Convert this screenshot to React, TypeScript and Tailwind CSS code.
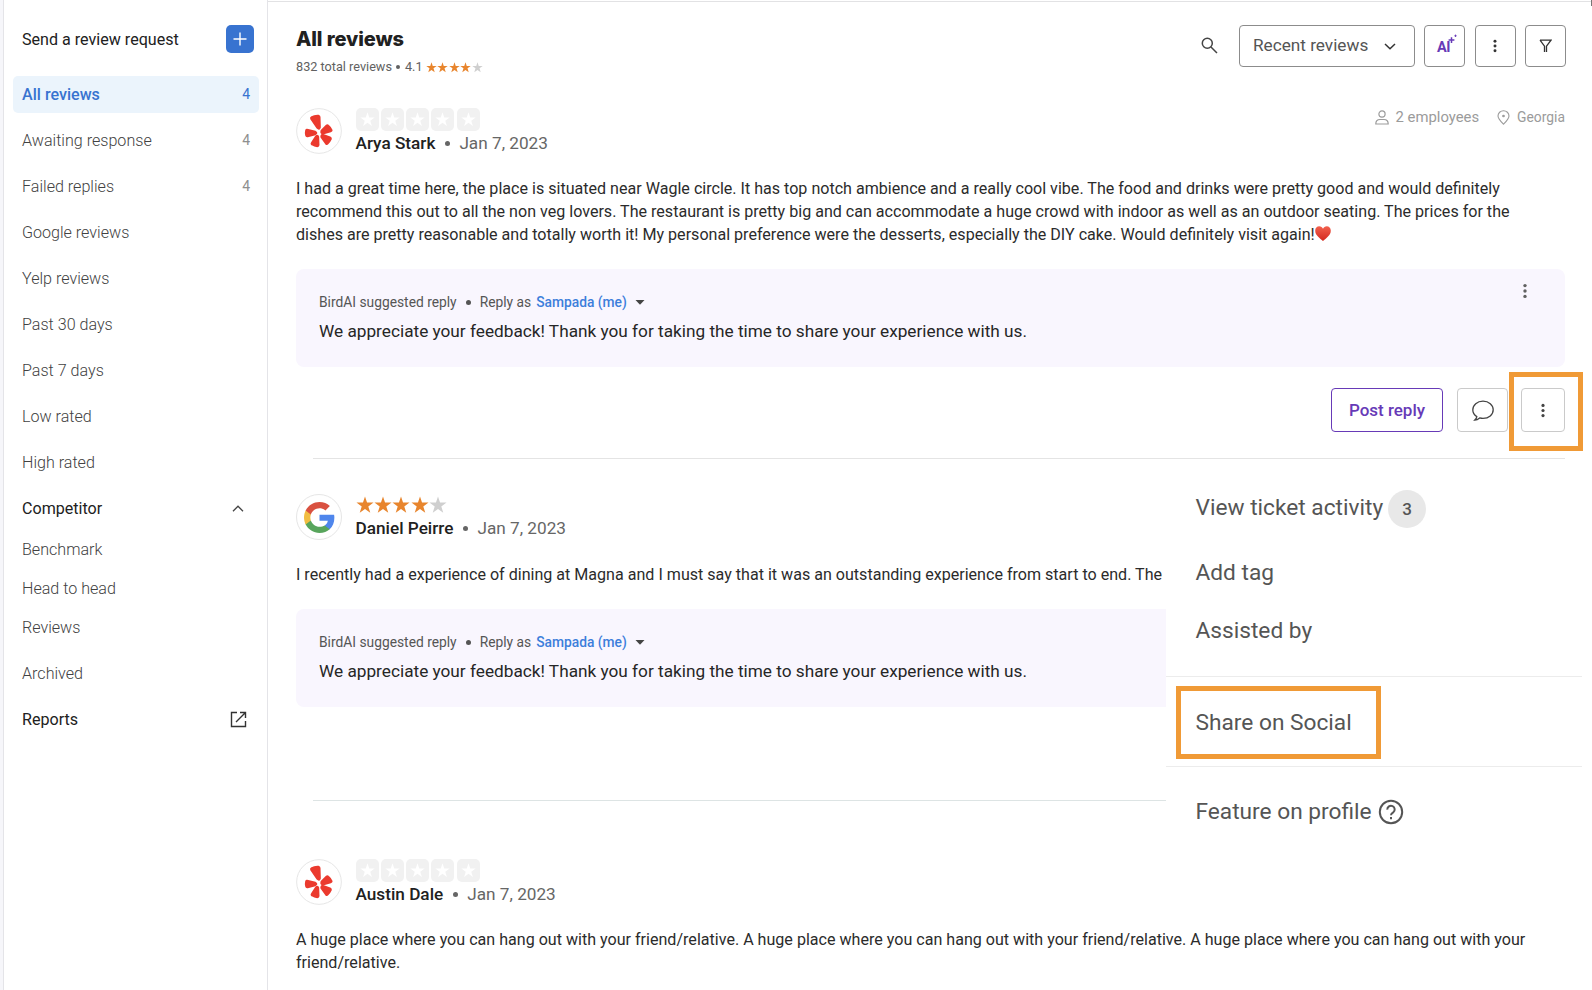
import type { ReactNode } from "react";

type NavItem = { label: string; count?: number; active?: boolean };

const FILTERS: NavItem[] = [
  { label: "All reviews", count: 4, active: true },
  { label: "Awaiting response", count: 4 },
  { label: "Failed replies", count: 4 },
  { label: "Google reviews" },
  { label: "Yelp reviews" },
  { label: "Past 30 days" },
  { label: "Past 7 days" },
  { label: "Low rated" },
  { label: "High rated" },
];

const COMPETITOR = ["Benchmark", "Head to head", "Reviews"];

const STAR =
  "M12 0.5 L14.7 8.6 L23.4 8.7 L16.4 13.9 L19 22.3 L12 17.2 L5 22.3 L7.6 13.9 L0.6 8.7 L9.3 8.6 Z";

function Star({ className }: { className: string }) {
  return (
    <svg viewBox="0 0 24 24" fill="currentColor" className={className}>
      <path d={STAR} />
    </svg>
  );
}

function Dots({ className }: { className: string }) {
  return (
    <svg viewBox="0 0 4 16" fill="currentColor" className={className}>
      <circle cx="2" cy="2.6" r="1.7" />
      <circle cx="2" cy="8" r="1.7" />
      <circle cx="2" cy="13.4" r="1.7" />
    </svg>
  );
}

function YelpLogo() {
  return (
    <svg viewBox="18 24 138 138" className="size-[46px]">
      <circle cx="87" cy="93" r="67" fill="#fff" stroke="#e6e6e6" strokeWidth="3" />
      <g fill="#eb3a2e" stroke="#eb3a2e" strokeWidth="5" strokeLinejoin="round">
        <path d="M64 52 Q74 46 86 47 Q89 48 89 51 L90 82 Q88 90 82 84 L63 56 Q62 53 64 52 Z" />
        <path d="M51 89 L76 95 Q83 99 76 103 L53 109 Q49 110 48 106 Q46 99 48 91 Q49 88 51 89 Z" />
        <path d="M94 92 L109 77 Q112 74 115 77 Q122 83 125 90 Q126 93 122 94 L101 100 Q91 101 94 92 Z" />
        <path d="M99 104 L120 112 Q124 114 123 117 Q119 126 113 131 Q110 134 108 131 L94 112 Q92 104 99 104 Z" />
        <path d="M85 110 L86 135 Q86 139 82 139 Q73 138 67 134 Q63 132 65 129 L77 110 Q83 104 85 110 Z" />
      </g>
    </svg>
  );
}

function GoogleLogo() {
  return (
    <div className="flex size-[46px] items-center justify-center rounded-full border border-[#e6e6e6] bg-white">
      <svg viewBox="2 2 44 44" className="size-[31px]">
        <path fill="#4f86ec" d="M45.1 24.5c0-1.6-.1-3.100-.4-4.500H24v8.500h11.800c-.5 2.800-2.100 5.100-4.400 6.700v5.500h7.100c4.200-3.800 6.600-9.500 6.600-16.200z" />
        <path fill="#58a55c" d="M24 46c5.900 0 10.900-2 14.500-5.300l-7.100-5.500c-2 1.300-4.500 2.100-7.400 2.100-5.700 0-10.500-3.800-12.300-9h-7.300v5.700C8.100 41.100 15.400 46 24 46z" />
        <path fill="#f1bd42" d="M11.700 28.200c-.4-1.300-.7-2.700-.7-4.200s.2-2.900.7-4.200v-5.700H4.300C2.900 17.100 2 20.500 2 24s.9 6.900 2.300 9.900l7.400-5.700z" />
        <path fill="#d95140" d="M24 10.700c3.200 0 6.100 1.100 8.400 3.300l6.300-6.300C34.900 4.200 29.900 2 24 2 15.400 2 8.100 6.900 4.300 14.100l7.400 5.700c1.800-5.200 6.600-9.100 12.300-9.100z" />
      </svg>
    </div>
  );
}

function Heart() {
  return (
    <svg viewBox="0 0 16 15" className="inline-block h-[15px] w-4 align-[-1px]">
      <defs>
        <linearGradient id="heart" x1="0" y1="0" x2="0" y2="1">
          <stop offset="0" stopColor="#f2604d" />
          <stop offset="1" stopColor="#d3291f" />
        </linearGradient>
      </defs>
      <path d="M8 14.900C5 12.400 .2 9.200 .2 4.700.2 2.100 2 .3 4.200.3 6 .3 7.300 1.300 8 2.800 8.700 1.300 10 .3 11.800.3c2.200 0 4 1.800 4 4.400C15.800 9.200 11 12.400 8 14.900z" fill="url(#heart)" />
    </svg>
  );
}

function EmptyStars() {
  return (
    <div className="flex gap-[2.300px]">
      {[1, 2, 3, 4, 5].map((n) => (
        <span key={n} className="flex size-[23px] items-center justify-center rounded-[5px] bg-[#f1f1f1] text-white">
          <Star className="size-[15px]" />
        </span>
      ))}
    </div>
  );
}

function Author({ logo, stars, name, gap }: { logo: ReactNode; stars: ReactNode; name: string; gap: string }) {
  return (
    <div className="flex h-[46px] gap-[13.500px]">
      {logo}
      <div className={gap}>
        {stars}
        <div className="flex items-center text-[17.200px] leading-6 text-[#666]">
          <span className="font-medium text-[#212121]">{name}</span>
          <span className="mx-[9.500px] size-[5px] rounded-full bg-[#666]" />
          <span>Jan 7, 2023</span>
        </div>
      </div>
    </div>
  );
}

function SuggestedReply({ menu }: { menu?: boolean }) {
  return (
    <div className="flex h-[98px] justify-between rounded-lg bg-[#f9f6fe] pl-[23px] pt-[22px] pr-[38px]">
      <div>
        <div className="flex h-[22px] items-center text-[13.800px] text-[#555]">
          <span>BirdAI suggested reply</span>
          <span className="mx-[9px] size-[5px] rounded-full bg-[#555]" />
          <span>Reply as</span>
          <span className="ml-[5px] font-medium text-[#3d7edb]">Sampada (me)</span>
          <svg viewBox="0 0 10 5" className="ml-2 h-[5px] w-[10px]" fill="#444">
            <path d="M0.500 0 H9.500 L5 4.800 Z" />
          </svg>
        </div>
        <p className="mt-[5.500px] text-[17.230px] leading-6 text-[#262626]">
          We appreciate your feedback! Thank you for taking the time to share your experience with us.
        </p>
      </div>
      {menu && <Dots className="-mt-2 h-4 w-1 text-[#616161]" />}
    </div>
  );
}

function Sidebar() {
  return (
    <aside className="flex w-[268px] shrink-0 border-r border-[#e4e4e8]">
      <div className="w-1 border-r border-[#e4e4e8] bg-[#f6f6fa]" />
      <div className="flex-1 pl-[9px] pr-2 pt-[25px] text-[16.100px] leading-[25px]">
        <div className="flex h-7 items-center justify-between pl-[9px] pr-[5px]">
          <span className="text-[#212121]">Send a review request</span>
          <span className="flex size-7 items-center justify-center rounded-[5px] bg-[#3873d0]">
            <svg viewBox="0 0 14 14" className="size-[14px]" stroke="#fff" strokeWidth="1.400">
              <path d="M7 0.500 V13.500 M0.500 7 H13.500" />
            </svg>
          </span>
        </div>
        <nav className="mt-[23px] flex flex-col gap-[9px]">
          {FILTERS.map((f) => (
            <div
              key={f.label}
              className={
                f.active
                  ? "flex h-[37px] items-center justify-between rounded-[5px] bg-[#ebf4fc] px-[9px] text-[#3873d0]"
                  : "flex h-[37px] items-center justify-between px-[9px] text-[#424242]"
              }
            >
              <span className={f.active ? "font-medium" : "font-light"}>{f.label}</span>
              {f.count && (
                <span className={f.active ? "text-[14px]" : "text-[14px] text-[#8f8f8f]"}>{f.count}</span>
              )}
            </div>
          ))}
        </nav>
        <div className="mt-[9px] flex h-[37px] items-center justify-between pl-[9px] pr-[15px] text-[#212121]">
          <span>Competitor</span>
          <svg viewBox="0 0 12 7" className="h-[7px] w-3" fill="none" stroke="#444" strokeWidth="1.300">
            <path d="M1 6.200 L6 1.200 L11 6.200" />
          </svg>
        </div>
        <div className="mt-[3px] flex flex-col px-[9px] font-light text-[#424242]">
          {COMPETITOR.map((label) => (
            <span key={label} className="flex h-[39px] items-center">
              {label}
            </span>
          ))}
          <span className="mt-[7px] flex h-[39px] items-center">Archived</span>
        </div>
        <div className="mt-[7px] flex h-[39px] items-center justify-between pl-[9px] pr-3 text-[#212121]">
          <span>Reports</span>
          <svg viewBox="0 0 17 17" className="size-[17px]" fill="none" stroke="#333" strokeWidth="1.400">
            <path d="M7 1.500 H1.500 V15.500 H15.500 V10" />
            <path d="M10 1.500 H15.500 V7 M15.500 1.500 L6 11" />
          </svg>
        </div>
      </div>
    </aside>
  );
}

function Header() {
  return (
    <header className="flex h-[66px] justify-between pr-[26px]">
      <div className="pt-[22px]">
        <h1 className="font-['Inter'] text-[20px] leading-[30px] font-extrabold tracking-[-0.100px] text-[#212121]">
          All reviews
        </h1>
        <div className="mt-[3px] flex h-5 items-center text-[12.700px] text-[#616161]">
          <span>832 total reviews</span>
          <span className="mx-[4.500px] size-1 rounded-full bg-[#616161]" />
          <span>4.1</span>
          <span className="ml-[3px] flex gap-[0.600px] text-[#e8852d]">
            <Star className="size-[11px]" />
            <Star className="size-[11px]" />
            <Star className="size-[11px]" />
            <Star className="size-[11px]" />
            <Star className="size-[11px] text-[#cfcfcf]" />
          </span>
        </div>
      </div>
      <div className="flex items-start gap-[9.500px] pt-[23px]">
        <svg viewBox="0 0 17 17" className="mr-[12px] mt-3 size-[17px]" fill="none" stroke="#444" strokeWidth="1.500">
          <circle cx="6.300" cy="6.300" r="5" />
          <path d="M10 10 L16 16" />
        </svg>
        <div className="flex h-[42px] w-[175.500px] items-center justify-between rounded border border-[#8c8c8c] pl-[13px] pr-[18px] text-[17.200px] text-[#555]">
          <span>Recent reviews</span>
          <svg viewBox="0 0 12 7" className="h-[7px] w-3" fill="none" stroke="#333" strokeWidth="1.500">
            <path d="M1 1 L6 5.800 L11 1" />
          </svg>
        </div>
        <div className="relative flex h-[42px] w-[41px] items-center rounded border border-[#8c8c8c] pl-3 pt-[3px] text-[14.500px] font-bold tracking-[-0.500px] text-[#673ab7]">
          AI
          <svg viewBox="0 0 10 10" className="absolute left-[23px] top-[8px] size-[10px]" fill="none" stroke="currentColor">
            <path d="M3.500 3.200 V9 M0.600 6.100 H6.400" strokeWidth="1.500" />
            <path d="M7.500 0.600 V3 M6.300 1.800 H8.700" strokeWidth="0.900" />
          </svg>
        </div>
        <div className="flex h-[42px] w-[41px] items-center justify-center rounded border border-[#8c8c8c]">
          <Dots className="h-[14px] w-[4px] text-[#333]" />
        </div>
        <div className="flex h-[42px] w-[41px] items-center justify-center rounded border border-[#8c8c8c]">
          <svg viewBox="0 0 13 14" className="h-[14px] w-[13px]" fill="none" stroke="#333" strokeWidth="1.300">
            <path d="M1 1.200 H12 L7.500 7.200 V13 M5.500 13 V7.200 L1 1.200" />
          </svg>
        </div>
      </div>
    </header>
  );
}

function ActionMenu() {
  return (
    <div className="absolute left-[898px] top-[472px] h-[372px] w-[426px] bg-white pt-[15px] text-[22.700px] leading-8 text-[#555]">
      <div className="flex h-11 items-center pl-[29.500px]">
        <span className="-mt-[3px]">View ticket activity</span>
        <span className="ml-[5px] flex size-[38px] items-center justify-center rounded-full bg-[#e8e8e8] text-[17px] font-medium">
          3
        </span>
      </div>
      <p className="mt-[26px] pl-[29.500px]">Add tag</p>
      <p className="mt-[26px] pl-[29.500px]">Assisted by</p>
      <div className="mt-[29px] w-[416px] border-t border-[#ececec]" />
      <div className="ml-[10px] mt-[9px] flex h-[73px] w-[205px] items-center border-[5px] border-[#f09a36] pl-[14.500px]">
        Share on Social
      </div>
      <div className="mt-[7px] w-[416px] border-t border-[#ececec]" />
      <div className="mt-[29px] flex items-center pl-[29.500px]">
        <span>Feature on profile</span>
        <svg viewBox="0 0 26 26" className="ml-[6px] size-[26px]" fill="none" stroke="#555" strokeWidth="2">
          <circle cx="13" cy="13" r="11.200" />
          <path d="M9.300 10.600 A3.700 3.700 0 1 1 15.200 13.400 C13.700 14.400 13 14.900 13 16.300" />
          <path d="M13 18 V20.200" />
        </svg>
      </div>
    </div>
  );
}

export default function App() {
  return (
    <div className="flex h-[990px] w-[1592px] overflow-hidden bg-white font-['Roboto',sans-serif]">
      <Sidebar />
      <main className="relative flex-1 pt-px">
        <div className="h-full border-t border-[#e2e2e4] pl-7">
          <Header />

          <section className="pt-10 pr-[27px]">
            <div className="flex justify-between">
              <Author logo={<YelpLogo />} stars={<EmptyStars />} name="Arya Stark" gap="" />
              <div className="flex h-[18px] items-center text-[14.850px] text-[#9b9b9b]">
                <svg viewBox="0 0 14 15" className="mr-[7px] h-[15px] w-[14px]" fill="none" stroke="currentColor" strokeWidth="1.200">
                  <circle cx="7" cy="4" r="3.100" />
                  <path d="M0.800 14 C0.800 11 2.500 9.500 5 9.500 H9 C11.500 9.500 13.200 11 13.200 14 Z" />
                </svg>
                <span>2 employees</span>
                <svg viewBox="0 0 13 15" className="ml-[18px] mr-[7px] h-[15px] w-[13px]" fill="none" stroke="currentColor" strokeWidth="1.100">
                  <path d="M6.500 14.200 C3.500 11.200 1 8.800 1 6 A5.500 5.300 0 0 1 12 6 C12 8.800 9.500 11.200 6.500 14.200 Z" />
                  <circle cx="6.500" cy="6" r="0.800" fill="currentColor" />
                </svg>
                <span className="text-[13.850px]">Georgia</span>
              </div>
            </div>
            <p className="mt-[23px] whitespace-nowrap text-[16.090px] leading-[23px] text-[#2b2b2b]">
              I had a great time here, the place is situated near Wagle circle. It has top notch ambience and a really cool vibe. The food and drinks were pretty good and would definitely
              <br />
              recommend this out to all the non veg lovers. The restaurant is pretty big and can accommodate a huge crowd with indoor as well as an outdoor seating. The prices for the
              <br />
              dishes are pretty reasonable and totally worth it! My personal preference were the desserts, especially the DIY cake. Would definitely visit again!
              <Heart />
            </p>
            <div className="mt-[23px]">
              <SuggestedReply menu />
            </div>
            <div className="mt-[21px] flex h-11 justify-end">
              <div className="mr-[14px] flex w-[112px] items-center justify-center rounded border border-[#673ab7] pt-px text-[17px] font-medium text-[#673ab7]">
                Post reply
              </div>
              <div className="mr-[13px] flex w-[51px] items-center justify-center rounded border border-[#cacaca]">
                <svg viewBox="0 0 22 21" className="h-[21px] w-[22px]" fill="none" stroke="#444" strokeWidth="1.300">
                  <path d="M4.800 16.600 C2.300 15 0.800 12.700 0.800 10 C0.800 5 5.200 1.200 11 1.200 C16.800 1.200 21.200 5 21.200 9.800 C21.200 14.600 16.800 18.400 11 18.400 C9.800 18.400 8.700 18.200 7.700 17.900 C6.400 19 4.800 20 2.800 20 C3.900 19 4.700 17.900 4.800 16.600 Z" />
                </svg>
              </div>
              <div className="relative flex w-11 items-center justify-center rounded border border-[#cacaca]">
                <Dots className="h-[15px] w-1 text-[#444]" />
                <span className="absolute -left-[13px] -top-[17px] h-[79px] w-[74px] border-[5px] border-[#f09a36]" />
              </div>
            </div>
            <div className="ml-[17px] mt-[26px] border-t border-[#e4e4e4]" />
          </section>

          <section className="pt-[35px] pr-[27px]">
            <Author
              logo={<GoogleLogo />}
              gap="pt-[2px]"
              name="Daniel Peirre"
              stars={
                <div className="mb-[2px] flex gap-[0.400px] text-[#e8852d]">
                  <Star className="size-[18px]" />
                  <Star className="size-[18px]" />
                  <Star className="size-[18px]" />
                  <Star className="size-[18px]" />
                  <Star className="size-[18px] text-[#cfcfcf]" />
                </div>
              }
            />
            <p className="mt-[23px] text-[16.090px] leading-[23px] text-[#2b2b2b]">
              I recently had a experience of dining at Magna and I must say that it was an outstanding experience from start to end. The
            </p>
            <div className="mt-[23px]">
              <SuggestedReply />
            </div>
            <div className="ml-[17px] mt-[93px] border-t border-[#dde4e4]" />
          </section>

          <section className="pt-[58px] pr-[27px]">
            <Author logo={<YelpLogo />} stars={<EmptyStars />} name="Austin Dale" gap="" />
            <p className="mt-[23px] whitespace-nowrap text-[16.090px] leading-[23px] text-[#2b2b2b]">
              A huge place where you can hang out with your friend/relative. A huge place where you can hang out with your friend/relative. A huge place where you can hang out with your
              <br />
              friend/relative.
            </p>
          </section>
        </div>
        <ActionMenu />
        <span className="absolute right-0 top-0 h-[6px] w-px bg-[#777]" />
      </main>
    </div>
  );
}
